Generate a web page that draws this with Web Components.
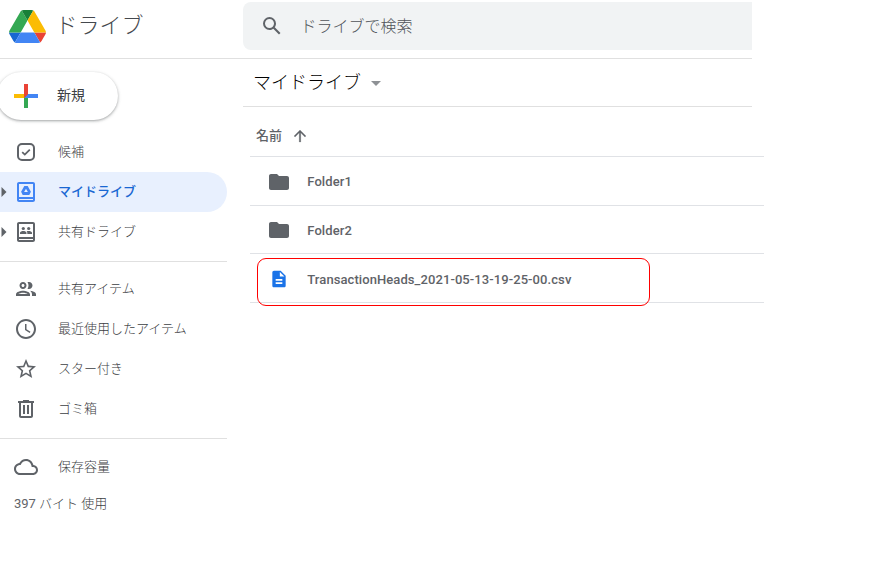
<!DOCTYPE html>
<html lang="ja">
<head>
<meta charset="utf-8">
<title>マイドライブ</title>
<style>
  body { margin: 0; background: #fff; color: #5f6368; font-family: Roboto, "Noto Sans CJK JP", sans-serif; }
</style>
</head>
<body>
<drive-app></drive-app>

<script>
const ICONS = {
  search: '<path d="M20.49 19l-5.73-5.73C15.53 12.2 16 10.91 16 9.5A6.5 6.5 0 1 0 9.5 16c1.41 0 2.7-.47 3.77-1.24L19 20.49 20.49 19zM5 9.5C5 7.01 7.01 5 9.5 5S14 7.01 14 9.5 11.99 14 9.5 14 5 11.99 5 9.5z"/>',
  plus: '<path fill="#ea4335" d="M16 6h4v12l-4 2z"/><path fill="#34a853" d="M16 18h4v12h-4z"/><path fill="#4285f4" d="M30 16v4H16l4-4z"/><path fill="#fbbc04" d="M6 16h12l-2 4H6z"/><path fill="#ea4335" d="M16 16h4l-4 4z"/>',
  priority: '<rect x="4" y="4" width="16" height="16" rx="4" fill="none" stroke="currentColor" stroke-width="2"/><path d="M8.2 12.1l2.6 2.5 5-5" fill="none" stroke="currentColor" stroke-width="1.8"/>',
  mydrive: '<path fill-rule="evenodd" d="M19 2H5c-1.1 0-2 .9-2 2v16c0 1.1.9 2 2 2h14c1.1 0 2-.9 2-2V4c0-1.1-.9-2-2-2zm0 18H5v-1h14v1zm0-3H5V4h14v13z"/><path fill-rule="evenodd" d="M10.3 6h3.4l3.2 5.8-1.6 3.1H8.7l-1.6-3.1L10.3 6zm1.7 2.7l-1.9 3.4h3.8L12 8.7z"/>',
  shareddrive: '<path fill-rule="evenodd" d="M19 2H5c-1.1 0-2 .9-2 2v16c0 1.1.9 2 2 2h14c1.1 0 2-.9 2-2V4c0-1.1-.9-2-2-2zm0 18H5v-1h14v1zm0-3H5V4h14v13z"/><circle cx="9.3" cy="8.5" r="1.6"/><circle cx="14.7" cy="8.5" r="1.6"/><path d="M6 14v-1.2c0-1.2 2-1.8 3.3-1.8s3.2.6 3.2 1.8V14zM13.3 14v-1.2c0-.7-.3-1.2-.7-1.6.7-.2 1.5-.2 2.1-.2 1.3 0 3.3.6 3.3 1.8V14z"/>',
  people: '<path d="M9 13.75c-2.34 0-7 1.17-7 3.5V19h14v-1.75c0-2.33-4.66-3.5-7-3.5zM4.34 17c.84-.58 2.87-1.25 4.66-1.25s3.82.67 4.66 1.25H4.34zM9 12c1.93 0 3.5-1.57 3.5-3.5S10.93 5 9 5 5.5 6.57 5.5 8.5 7.07 12 9 12zm0-5c.83 0 1.5.67 1.5 1.5S9.83 10 9 10s-1.5-.67-1.5-1.5S8.17 7 9 7zm7.04 6.81c1.16.84 1.96 1.96 1.96 3.44V19h4v-1.75c0-2.02-3.5-3.17-5.96-3.44zM15 12c1.93 0 3.5-1.57 3.5-3.5S16.93 5 15 5c-.54 0-1.04.13-1.5.35.63.89 1 1.98 1 3.15s-.37 2.26-1 3.15c.46.22.96.35 1.5.35z"/>',
  clock: '<path d="M12 2C6.48 2 2 6.48 2 12s4.48 10 10 10 10-4.48 10-10S17.52 2 12 2zm0 18c-4.42 0-8-3.58-8-8s3.58-8 8-8 8 3.58 8 8-3.58 8-8 8z"/><path d="M12.5 7H11v6l4.7 3.1.8-1.3-4-2.5z"/>',
  star: '<path d="M22 9.24l-7.19-.62L12 2 9.19 8.63 2 9.24l5.46 4.73L5.82 21 12 17.27 18.18 21l-1.63-7.03L22 9.24zM12 15.4l-3.76 2.27 1-4.28-3.32-2.88 4.38-.38L12 6.1l1.71 4.04 4.38.38-3.32 2.88 1 4.28L12 15.4z"/>',
  trash: '<path d="M15 4V3H9v1H4v2h1v13c0 1.1.9 2 2 2h10c1.1 0 2-.9 2-2V6h1V4h-5zm2 15H7V6h10v13z"/><path d="M9 8h2v9H9zM13 8h2v9h-2z"/>',
  cloud: '<path d="M19.35 10.04C18.67 6.59 15.64 4 12 4 9.11 4 6.6 5.64 5.35 8.04 2.34 8.36 0 10.91 0 14c0 3.31 2.69 6 6 6h13c2.76 0 5-2.24 5-5 0-2.64-2.05-4.78-4.65-4.96zM19 18H6c-2.21 0-4-1.79-4-4 0-2.05 1.53-3.76 3.56-3.97l1.07-.11.5-.95C8.08 7.14 9.94 6 12 6c2.62 0 4.88 1.86 5.39 4.43l.3 1.5 1.53.11c1.56.1 2.78 1.41 2.78 2.96 0 1.65-1.35 3-3 3z"/>',
  folder: '<path d="M10 4H4c-1.1 0-1.99.9-1.99 2L2 18c0 1.1.9 2 2 2h16c1.1 0 2-.9 2-2V8c0-1.1-.9-2-2-2h-8l-2-2z"/>',
  file: '<path d="M14 2H6c-1.1 0-1.99.9-1.99 2L4 20c0 1.1.89 2 1.99 2H18c1.1 0 2-.9 2-2V8l-6-6zm2 16H8v-2h8v2zm0-4H8v-2h8v2zm-3-5V3.5L18.5 9H13z"/>',
  up: '<path d="M4 12l1.41 1.41L11 7.83V20h2V7.83l5.58 5.59L20 12l-8-8-8 8z" stroke="currentColor" stroke-width=".3"/>',
  down: '<path d="M7 10l5 5 5-5z"/>',
  right: '<path d="M9 6l6 6-6 6z"/>',
  logo: '<path fill="#1967d2" d="M6.6 66.85l3.85 6.65c.8 1.4 1.95 2.5 3.3 3.3L27.5 53H0c0 1.55.4 3.1 1.2 4.5z"/><path fill="#34a853" d="M43.65 25L29.9 1.2c-1.35.8-2.5 1.9-3.3 3.3l-25.4 44A9.06 9.06 0 0 0 0 53h27.5z"/><path fill="#ea4335" d="M73.55 76.8c1.35-.8 2.5-1.9 3.3-3.3l9.25-16c.8-1.4 1.2-2.95 1.2-4.5H59.8z"/><path fill="#188038" d="M43.65 25L57.4 1.2C56.05.4 54.5 0 52.9 0H34.4c-1.6 0-3.15.45-4.5 1.2z"/><path fill="#4285f4" d="M59.8 53H27.5L13.75 76.8c1.35.8 2.9 1.2 4.5 1.2h50.8c1.6 0 3.15-.45 4.5-1.2z"/><path fill="#fbbc04" d="M73.4 26.5l-12.7-22c-.8-1.4-1.95-2.5-3.3-3.3L43.65 25 59.8 53h27.45c0-1.55-.4-3.1-1.2-4.5z"/>'
};
const BOXES = { plus: '6 6 24 24', logo: '0 0 87.3 78' };

function define(name, html) {
  const tpl = document.createElement('template');
  tpl.innerHTML = html;
  customElements.define(name, class extends HTMLElement {
    constructor() {
      super();
      this.attachShadow({ mode: 'open' }).appendChild(tpl.content.cloneNode(true));
    }
  });
}

// <drive-icon name="...">, sized by --w / --h
class DriveIcon extends HTMLElement {
  connectedCallback() {
    if (this.shadowRoot) return;
    const name = this.getAttribute('name');
    this.attachShadow({ mode: 'open' }).innerHTML = `
<style>
  :host { display: block; flex: none; width: var(--w, 24px); height: var(--h, var(--w, 24px)); }
  svg { display: block; width: 100%; height: 100%; fill: currentColor; }
</style>
<svg viewBox="${BOXES[name] || '0 0 24 24'}" aria-hidden="true">${ICONS[name]}</svg>`;
  }
}
customElements.define('drive-icon', DriveIcon);

define('drive-header', `
<style>
  :host { display: flex; box-sizing: border-box; width: 752px; height: 59px; border-bottom: 1px solid #e0e0e0; font-weight: 300; }
  .brand { display: flex; box-sizing: border-box; width: 243px; height: 51px; padding-left: 8.5px; align-items: center; gap: 10px; }
  .brand drive-icon { --w: 37px; --h: 33px; margin-top: 1px; }
  .brand span { font-size: 22px; line-height: 30px; margin-top: 1px; color: #44484d; }
  .search { display: flex; flex: 1; height: 48px; margin-top: 2px; align-items: center; background: #f1f3f4;
    border-radius: 8px 0 0 8px; padding-left: 17px; box-sizing: border-box; font-size: 16px; color: #50545a; }
  .search drive-icon { margin-right: 16.5px; color: #5f6368; }
  .search span { margin-top: -2px; }
</style>
<div class="brand"><drive-icon name="logo"></drive-icon><span>ドライブ</span></div>
<div class="search"><drive-icon name="search"></drive-icon><span>ドライブで検索</span></div>`);

define('drive-new-button', `
<style>
  :host { display: flex; box-sizing: border-box; width: 121px; height: 48px; margin: 13px 0 12px -3px; padding-left: 17px;
    align-items: center; gap: 19px; border-radius: 24px; font-size: 14px; color: #3c4043;
    box-shadow: 0 1px 2px rgba(60,64,67,.3), 0 1px 3px 1px rgba(60,64,67,.15); }
  span { margin-top: -4px; }
</style>
<drive-icon name="plus"></drive-icon><span><slot></slot></span>`);

class DriveNavItem extends HTMLElement {
  connectedCallback() {
    if (this.shadowRoot) return;
    this.attachShadow({ mode: 'open' }).innerHTML = `
<style>
  :host { display: flex; height: 40px; align-items: center; font-size: 13px; line-height: 20px; font-weight: 300; }
  :host([active]) { background: #e8f0fe; border-radius: 0 20px 20px 0; font-weight: 500; }
  .caret { width: 14px; height: 20px; flex: none; overflow: hidden; }
  .caret drive-icon { --w: 20px; margin-left: -6.5px; }
  :host([active]) .icon { color: #4285f4; }
  .label { margin-left: 20px; white-space: nowrap; color: #3c4043; }
  :host([active]) .label { color: #1967d2; }
</style>
<span class="caret">${this.hasAttribute('expandable') ? '<drive-icon name="right"></drive-icon>' : ''}</span>
<drive-icon class="icon" name="${this.getAttribute('icon')}"></drive-icon>
<span class="label"><slot></slot></span>`;
  }
}
customElements.define('drive-nav-item', DriveNavItem);

define('drive-sidebar', `
<style>
  :host { display: block; width: 227px; }
  hr { height: 1px; margin: 9px 0 7px; border: 0; background: #e0e0e0; }
  hr + hr, .last { margin-bottom: 8px; }
  .usage { margin: 7px 0 0 14px; font-size: 13px; line-height: 20px; }
  .usage span { font-weight: 300; color: #3c4043; }
</style>
<drive-new-button>新規</drive-new-button>
<drive-nav-item icon="priority">候補</drive-nav-item>
<drive-nav-item icon="mydrive" active expandable>マイドライブ</drive-nav-item>
<drive-nav-item icon="shareddrive" expandable>共有ドライブ</drive-nav-item>
<hr>
<drive-nav-item icon="people">共有アイテム</drive-nav-item>
<drive-nav-item icon="clock">最近使用したアイテム</drive-nav-item>
<drive-nav-item icon="star">スター付き</drive-nav-item>
<drive-nav-item icon="trash">ゴミ箱</drive-nav-item>
<hr class="last">
<drive-nav-item icon="cloud">保存容量</drive-nav-item>
<div class="usage">397<span> バイト 使用</span></div>`);

class DriveFileRow extends HTMLElement {
  connectedCallback() {
    if (this.shadowRoot) return;
    this.attachShadow({ mode: 'open' }).innerHTML = `
<style>
  :host { display: flex; position: relative; box-sizing: border-box; height: 48.67px; padding: 2px 0 0 17px; align-items: center;
    border-bottom: 1px solid #e0e2e6; font-size: 13px; font-weight: 500; letter-spacing: .08px; color: #5f6368; }
  drive-icon { margin-right: 16.3px; }
  :host([icon="file"]) drive-icon { --w: 20px; color: #1a73e8; margin: 0 18.3px 0 2px; }
  /* outline around the marked file */
  :host([marked])::after { content: ""; position: absolute; left: 7px; top: 4px; width: 391px; height: 46px;
    border: 1px solid #f00; border-radius: 9px; }
</style>
<drive-icon name="${this.getAttribute('icon')}"></drive-icon><slot></slot>`;
  }
}
customElements.define('drive-file-row', DriveFileRow);

define('drive-content', `
<style>
  :host { display: block; width: 521px; }
  .path { display: flex; box-sizing: border-box; width: 509px; height: 48px; padding-left: 10px; align-items: center;
    border-bottom: 1px solid #e0e0e0; font-size: 18px; font-weight: 300; color: #000; }
  .path span { margin-top: -3px; }
  .path drive-icon { --w: 24px; color: #8e9195; margin: 1px 0 0 3px; }
  .list { margin-left: 7px; }
  .head { display: flex; box-sizing: border-box; height: 50px; padding: 6px 0 0 6px; align-items: center; gap: 9px;
    border-bottom: 1px solid #e0e2e6; font-size: 13px; font-weight: 500; }
  .head drive-icon { --w: 18px; margin-top: 2px; }
</style>
<div class="path"><span>マイドライブ</span><drive-icon name="down"></drive-icon></div>
<div class="list">
  <div class="head"><span>名前</span><drive-icon name="up"></drive-icon></div>
  <slot></slot>
</div>`);

define('drive-app', `
<style>
  :host { display: block; width: 880px; height: 579px; overflow: hidden; }
  main { display: flex; gap: 16px; }
</style>
<drive-header></drive-header>
<main>
  <drive-sidebar></drive-sidebar>
  <drive-content>
    <drive-file-row icon="folder">Folder1</drive-file-row>
    <drive-file-row icon="folder">Folder2</drive-file-row>
    <drive-file-row icon="file" marked>TransactionHeads_2021-05-13-19-25-00.csv</drive-file-row>
  </drive-content>
</main>`);
</script>
</body>
</html>
